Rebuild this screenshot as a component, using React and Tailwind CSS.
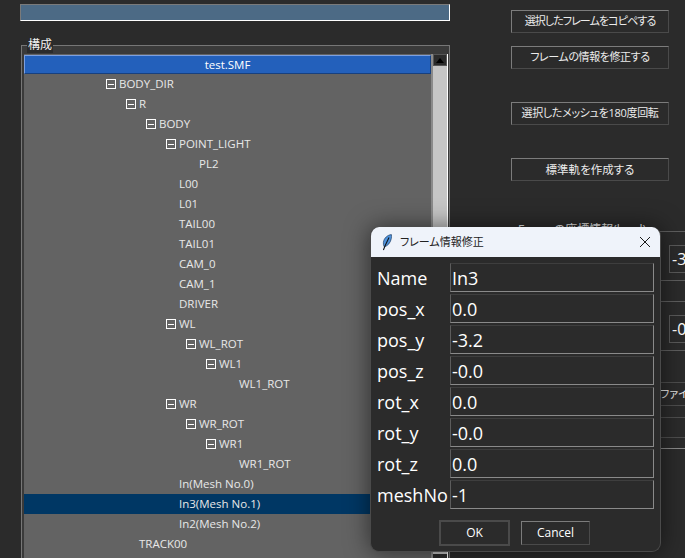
const FONT = "font-['Open_Sans','Noto_Sans_CJK_JP',sans-serif]";

const TREE = [
  { t: "BODY_DIR", l: 1, e: true },
  { t: "R", l: 2, e: true },
  { t: "BODY", l: 3, e: true },
  { t: "POINT_LIGHT", l: 4, e: true },
  { t: "PL2", l: 5 },
  { t: "L00", l: 4 },
  { t: "L01", l: 4 },
  { t: "TAIL00", l: 4 },
  { t: "TAIL01", l: 4 },
  { t: "CAM_0", l: 4 },
  { t: "CAM_1", l: 4 },
  { t: "DRIVER", l: 4 },
  { t: "WL", l: 4, e: true },
  { t: "WL_ROT", l: 5, e: true },
  { t: "WL1", l: 6, e: true },
  { t: "WL1_ROT", l: 7 },
  { t: "WR", l: 4, e: true },
  { t: "WR_ROT", l: 5, e: true },
  { t: "WR1", l: 6, e: true },
  { t: "WR1_ROT", l: 7 },
  { t: "In(Mesh No.0)", l: 4 },
  { t: "In3(Mesh No.1)", l: 4, s: true },
  { t: "In2(Mesh No.2)", l: 4 },
  { t: "TRACK00", l: 2 },
];

const FIELDS = [
  ["Name", "In3"],
  ["pos_x", "0.0"],
  ["pos_y", "-3.2"],
  ["pos_z", "-0.0"],
  ["rot_x", "0.0"],
  ["rot_y", "-0.0"],
  ["rot_z", "0.0"],
  ["meshNo", "-1"],
];

function Expander() {
  return (
    <span className="absolute top-[5px] -ml-[13px] flex h-[10px] w-[10px] items-center justify-center border border-white">
      <span className="h-px w-[6px] bg-white" />
    </span>
  );
}

function TreeRow({ t, l, e, s }) {
  return (
    <div
      className={`relative flex h-5 items-center text-[11.5px] text-[#e8e8e8] ${s ? "bg-[#003764]" : ""}`}
      style={{ paddingLeft: 95 + 20 * (l - 1) }}
    >
      {e && <Expander />}
      <span>{t}</span>
    </div>
  );
}

function SideButton({ children, className = "" }) {
  return (
    <div
      className={`flex h-[23px] w-[158px] items-center justify-center border border-t-[#7c7c7c] border-l-[#7c7c7c] border-r-[#4a4a4a] border-b-[#4a4a4a] whitespace-nowrap text-[#ececec] [font-feature-settings:'palt'] ${className}`}
    >
      {children}
    </div>
  );
}

function CoordGroup({ value, className = "" }) {
  return (
    <div className={`h-[50px] w-[174px] border-t border-b border-t-[#5e5e5e] border-b-[#5e5e5e] pt-[13px] pl-[158px] ${className}`}>
      <div className="flex h-[28px] w-[60px] items-center border border-[#5a5a5a] pl-[2px] text-[16px] text-white">
        {value}
      </div>
    </div>
  );
}

function Feather() {
  return (
    <svg width="10" height="17" viewBox="0 0 10 17" fill="none">
      <path d="M9.4 0.6C5.5 1 2 4 1.4 8.3 1.2 10 1.5 11.6 2.2 12.8 5.8 12 8.6 8.6 9.3 4.5 9.6 3 9.6 1.8 9.4 0.6Z" fill="#4f93dc" stroke="#1f3f66" strokeWidth="0.7" />
      <path d="M7 3.5 3.2 11.5 1.4 16" stroke="#101418" strokeWidth="1.1" />
    </svg>
  );
}

function Dialog() {
  return (
    <div className="absolute top-[227px] left-[370px] flex h-[325px] w-[291px] flex-col overflow-hidden rounded-[9px] border border-[#4a4a4a] border-t-0 bg-[#2b2b2b] shadow-[0_0_24px_rgba(0,0,0,0.55)]">
      <div className="flex h-[30px] shrink-0 items-center bg-[#eff3fa] pr-[9px] pl-[11px] text-[11px] text-[#222]">
        <Feather />
        <span className="ml-[8px] [font-feature-settings:'palt']">フレーム情報修正</span>
        <svg className="ml-auto" width="12" height="12" viewBox="0 0 12 12" stroke="#1a1a1a" strokeWidth="1">
          <path d="M1 1 11 11M11 1 1 11" />
        </svg>
      </div>
      <div className="flex flex-col gap-[2px] pt-[6px] pl-[6px]">
        {FIELDS.map(([k, v]) => (
          <div key={k} className="flex h-[29px] items-center">
            <div className="w-[73px] pt-px text-[18px] text-white">{k}</div>
            <div className="flex h-[29px] w-[204px] items-center border border-t-[#3e3e3e] border-l-[#5c5c5c] border-r-[#8a8a8a] border-b-[#8a8a8a] pt-px pl-px text-[18px] text-white">
              {v}
            </div>
          </div>
        ))}
      </div>
      <div className="flex items-start gap-[11px] pt-[11px] pl-[68px]">
        <div className="flex h-[26px] w-[71px] items-center justify-center border-2 border-[#4a4a4a] text-[12px] text-white">OK</div>
        <div className="mt-px flex h-[24px] w-[69px] items-center justify-center border border-t-[#7c7c7c] border-l-[#7c7c7c] border-r-[#4a4a4a] border-b-[#4a4a4a] text-[12px] text-white">Cancel</div>
      </div>
    </div>
  );
}

export default function App() {
  return (
    <div className={`relative flex h-[558px] w-[685px] overflow-hidden bg-[#2b2b2b] ${FONT}`}>
      <div className="w-[450px] shrink-0">
        <div className="mt-[4px] ml-[20px] h-[17px] w-[430px] border-t border-l border-t-[#7a7a7a] border-l-[#7a7a7a] border-r border-b border-r-white border-b-white bg-[#4c6a85]" />
        <div className="relative mt-[24px] ml-[21px] flex w-[429px] border-t border-r border-l border-[#767676] bg-[#3a3a3a] pt-2 pr-px pl-[2px]">
          <span className="absolute -top-[9px] left-[5px] bg-[#2b2b2b] px-px text-[12px] leading-[16px] text-[#f0f0f0]">構成</span>
          <div className="h-[520px] w-[407px] bg-[#636363] pt-px">
            <div className="flex h-[19px] items-center justify-center border border-t-[#7ca0e0] border-l-[#7ca0e0] border-r-[#17407f] border-b-[#17407f] bg-[#2360bb] text-[11.5px] text-white">
              test.SMF
            </div>
            {TREE.map((r) => (
              <TreeRow key={r.t} {...r} />
            ))}
          </div>
          <div className="flex h-[520px] w-[17px] flex-col border-r border-l-2 border-r-white border-l-[#8a8a8a] bg-[#c6c6c6]">
            <div className="flex h-[12px] w-[14px] items-center justify-center border border-[#555] bg-[#2b2b2b]">
              <span className="h-0 w-0 border-x-[4px] border-b-[5px] border-x-transparent border-b-black" />
            </div>
            <div className="flex-1" />
            <div className="h-[20px] bg-[#2b2b2b]" />
          </div>
        </div>
      </div>
      <div className="flex w-[235px] flex-col pl-[61px]">
        <SideButton className="mt-[10px] text-[11px] tracking-[-0.9px]">選択したフレームをコピペする</SideButton>
        <SideButton className="mt-[13px] text-[11px] tracking-[-0.4px]">フレームの情報を修正する</SideButton>
        <SideButton className="mt-[33px] text-[11px] tracking-[-0.3px]">選択したメッシュを180度回転</SideButton>
        <SideButton className="mt-[33px] text-[11.5px]">標準軌を作成する</SideButton>
        <div className="relative mt-[50px]">
          <span className="absolute -top-[9px] left-[6px] bg-[#2b2b2b] px-px text-[12px] leading-[16px] whitespace-nowrap text-[#e8e8e8] [font-feature-settings:'palt']">Frameの座標情報(local)</span>
          <CoordGroup value="-3.2" />
        </div>
        <CoordGroup value="-0.0" className="mt-5" />
        <div className="mt-[31px] flex h-[24px] w-[174px] items-center border-t border-b border-[#4e4e4e] pl-[149px] text-[11px] whitespace-nowrap text-[#e8e8e8] [font-feature-settings:'palt']">ファイル</div>
        <div className="mt-[11px] h-[21px] w-[174px] border-t border-b border-[#4e4e4e]" />
        <div className="mt-[10px] w-[174px] border-t border-[#8a8a8a]" />
      </div>
      <Dialog />
    </div>
  );
}
